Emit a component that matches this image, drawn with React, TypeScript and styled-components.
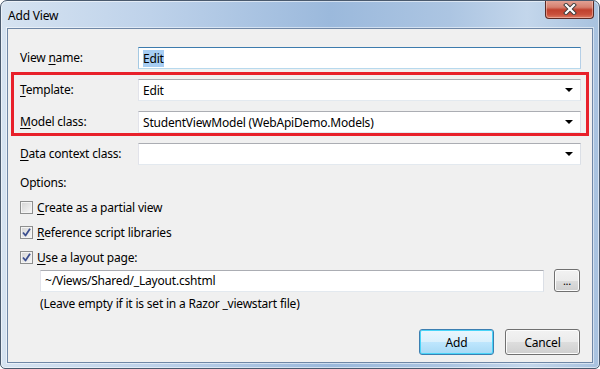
import styled, { createGlobalStyle } from "styled-components";

const Global = createGlobalStyle`
  html, body { margin: 0; padding: 0; background: #fff; }
  body { font-family: "Noto Sans", "Open Sans", sans-serif; font-size: 12px; letter-spacing: -0.2px; color: #000; }
`;

const Window = styled.div`
  width: 600px;
  height: 369px;
  box-sizing: border-box;
  border: 1px solid #4a5a6e;
  border-radius: 7px 7px 5px 5px;
  background: linear-gradient(90deg, #d6e3f1 0%, #bed2ea 25%, #9bb9dc 55%, #acc5e2 75%, #c3d6eb 88%, #a8c2df 100%);
  display: flex;
  flex-direction: column;
  overflow: hidden;
  box-shadow: inset 0 0 0 1px rgba(255, 255, 255, 0.55);
`;

const TitleBar = styled.div`
  height: 27px;
  display: flex;
  align-items: flex-start;
  justify-content: space-between;
  padding-left: 7px;
`;

const Title = styled.div`
  padding-top: 6px;
  font-size: 12px;
  color: #000;
`;

const CloseButton = styled.div`
  width: 47px;
  height: 18px;
  margin-right: 5px;
  margin-top: -1px;
  border: 1px solid #5b2a25;
  border-top: none;
  border-radius: 0 0 4px 4px;
  background: linear-gradient(180deg, #e4a699 0%, #d6806f 40%, #c0412e 55%, #c9503c 80%, #dc7b63 100%);
  box-shadow: inset 0 0 0 1px rgba(255, 220, 210, 0.45);
  display: flex;
  align-items: center;
  justify-content: center;
`;

const Client = styled.div`
  position: relative;
  flex: 1;
  margin: 0 6px 5px 6px;
  border: 1px solid #6f87a6;
  box-shadow: 0 0 0 1px rgba(255, 255, 255, 0.5);
  background: #f0f0f0;
  padding: 18px 11px 0 12px;
  display: flex;
  flex-direction: column;
`;

const FieldGrid = styled.div`
  display: grid;
  grid-template-columns: 118px 1fr;
  row-gap: 10px;
  align-items: center;
`;

const Label = styled.label`
  line-height: 16px;
`;

const Key = styled.span`
  text-decoration: underline;
  text-underline-offset: 2px;
`;

const Box = styled.div<{ $focused?: boolean }>`
  height: 22px;
  box-sizing: border-box;
  background: #fff;
  border: 1px solid;
  border-color: ${(p) =>
    p.$focused ? "#3d7bad #b5cfe7 #b7d9ed #a4c9e3" : "#abadb3 #dbdfe6 #e3e9ef #e2e3ea"};
  display: flex;
  align-items: center;
  padding: 0 6px 0 4px;
  gap: 6px;
`;

const BoxText = styled.span`
  flex: 1;
  white-space: nowrap;
  overflow: hidden;
`;

const Selected = styled.span`
  background: #a6cdf3;
  padding: 1px 0;
`;

const Arrow = styled.span`
  width: 0;
  height: 0;
  border-left: 4px solid transparent;
  border-right: 4px solid transparent;
  border-top: 4px solid #000;
  margin-right: 1px;
`;

const Highlight = styled.div`
  position: absolute;
  left: 3px;
  top: 43px;
  width: 578px;
  height: 64px;
  box-sizing: border-box;
  border: 3px solid #e8202a;
  pointer-events: none;
`;

const Options = styled.div`
  margin-top: 10px;
  line-height: 16px;
`;

const CheckList = styled.div`
  margin-top: 8px;
  display: flex;
  flex-direction: column;
  gap: 9px;
`;

const CheckRow = styled.div`
  display: flex;
  align-items: center;
  gap: 4px;
  height: 16px;
`;

const CheckBox = styled.span`
  width: 13px;
  height: 13px;
  box-sizing: border-box;
  border: 1px solid #8e8f8f;
  background: linear-gradient(135deg, #d4d4d4 0%, #ededed 70%, #fafafa 100%);
  box-shadow: inset 0 0 0 1px #f4f4f4;
  display: flex;
  align-items: center;
  justify-content: center;
`;

const Indent = styled.div`
  margin-left: 20px;
  margin-top: 4px;
  display: flex;
  flex-direction: column;
`;

const PathRow = styled.div`
  display: flex;
  align-items: center;
  gap: 10px;
  padding-right: 1px;
`;

const PathBox = styled(Box)`
  flex: 1;
`;

const Hint = styled.div`
  margin-top: 4px;
  line-height: 16px;
`;

const Button = styled.button<{ $default?: boolean }>`
  font: inherit;
  letter-spacing: inherit;
  color: #000;
  height: 26px;
  box-sizing: border-box;
  border-radius: 3px;
  border: 1px solid ${(p) => (p.$default ? "#3c7fb1" : "#707070")};
  background: ${(p) =>
    p.$default
      ? "linear-gradient(180deg, #eaf6fd 0%, #d9f0fc 50%, #bee6fd 51%, #a7d9f5 100%)"
      : "linear-gradient(180deg, #f2f2f2 0%, #ebebeb 50%, #dddddd 51%, #cfcfcf 100%)"};
  box-shadow: inset 0 0 0 1px ${(p) => (p.$default ? "#48d4f8" : "#fcfcfc")};
  padding: 0;
`;

const SmallButton = styled(Button)`
  width: 26px;
  height: 23px;
  font-size: 11px;
  line-height: 10px;
`;

const Footer = styled.div`
  margin-top: auto;
  margin-bottom: 7px;
  display: flex;
  justify-content: flex-end;
  gap: 11px;
  padding-right: 1px;
`;

const DialogButton = styled(Button)`
  width: 75px;
`;

function Check() {
  return (
    <svg width="9" height="9" viewBox="0 0 9 9">
      <path d="M1 4.5 L3.5 7.5 L8 0.8" fill="none" stroke="#3c4f8f" strokeWidth="1.8" strokeLinejoin="round" />
    </svg>
  );
}

function Combo({ value }: { value: string }) {
  return (
    <Box>
      <BoxText>{value}</BoxText>
      <Arrow />
    </Box>
  );
}

export default function App() {
  return (
    <>
      <Global />
      <Window>
        <TitleBar>
          <Title>Add View</Title>
          <CloseButton>
            <svg width="14" height="12" viewBox="0 0 14 12">
              <path d="M3 2 L11 10 M11 2 L3 10" stroke="#3a3a3a" strokeWidth="4" strokeLinecap="square" />
              <path d="M3 2 L11 10 M11 2 L3 10" stroke="#ffffff" strokeWidth="2.2" strokeLinecap="square" />
            </svg>
          </CloseButton>
        </TitleBar>
        <Client>
          <FieldGrid>
            <Label>View <Key>n</Key>ame:</Label>
            <Box $focused>
              <BoxText><Selected>Edit</Selected></BoxText>
            </Box>
            <Label><Key>T</Key>emplate:</Label>
            <Combo value="Edit" />
            <Label><Key>M</Key>odel class:</Label>
            <Combo value="StudentViewModel (WebApiDemo.Models)" />
            <Label><Key>D</Key>ata context class:</Label>
            <Combo value="" />
          </FieldGrid>
          <Highlight />
          <Options>Options:</Options>
          <CheckList>
            <CheckRow>
              <CheckBox />
              <span><Key>C</Key>reate as a partial view</span>
            </CheckRow>
            <CheckRow>
              <CheckBox><Check /></CheckBox>
              <span><Key>R</Key>eference script libraries</span>
            </CheckRow>
            <CheckRow>
              <CheckBox><Check /></CheckBox>
              <span><Key>U</Key>se a layout page:</span>
            </CheckRow>
          </CheckList>
          <Indent>
            <PathRow>
              <PathBox>
                <BoxText>~/Views/Shared/_Layout.cshtml</BoxText>
              </PathBox>
              <SmallButton>...</SmallButton>
            </PathRow>
            <Hint>(Leave empty if it is set in a Razor _viewstart file)</Hint>
          </Indent>
          <Footer>
            <DialogButton $default>Add</DialogButton>
            <DialogButton>Cancel</DialogButton>
          </Footer>
        </Client>
      </Window>
    </>
  );
}
